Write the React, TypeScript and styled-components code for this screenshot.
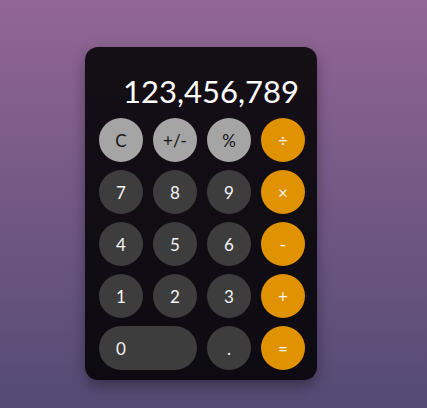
import React from "react";
import styled, { createGlobalStyle } from "styled-components";

const Global = createGlobalStyle`
  html, body { margin: 0; padding: 0; height: 100%; }
  body {
    background: linear-gradient(180deg, #926695 0%, #534a73 100%);
    font-family: Lato, "Open Sans", sans-serif;
    min-height: 408px;
  }
`;

const Page = styled.div`
  display: flex;
  align-items: flex-start;
  padding: 47px 0 0 85px;
`;

const Card = styled.div`
  width: 232px;
  box-sizing: border-box;
  padding: 26px 12px 10px 14px;
  border-radius: 13px;
  background: rgba(0, 0, 0, 0.85);
  box-shadow: 0 6px 14px rgba(0, 0, 0, 0.35);
  display: flex;
  flex-direction: column;
`;

const Display = styled.div`
  height: 36px;
  line-height: 36px;
  font-size: 31px;
  color: #ffffff;
  text-align: right;
  padding-right: 6px;
  margin-bottom: 9px;
  white-space: nowrap;
`;

const Grid = styled.div`
  display: grid;
  grid-template-columns: repeat(4, 44px);
  grid-auto-rows: 44px;
  column-gap: 10px;
  row-gap: 8px;
`;

type Kind = "fn" | "num" | "op";

const Key = styled.button<{ $kind: Kind; $wide?: boolean }>`
  border: none;
  padding: 0;
  margin: 0;
  font-family: Lato, "Open Sans", sans-serif;
  font-size: 17px;
  border-radius: 22px;
  cursor: pointer;
  display: flex;
  align-items: center;
  justify-content: ${(p) => (p.$wide ? "flex-start" : "center")};
  padding-left: ${(p) => (p.$wide ? "17px" : "0")};
  grid-column: ${(p) => (p.$wide ? "span 2" : "auto")};
  background: ${(p) =>
    p.$kind === "fn" ? "#a5a5a5" : p.$kind === "op" ? "#e09200" : "#3d3d3d"};
  color: ${(p) => (p.$kind === "fn" ? "#141414" : "#f4f4f4")};
`;

const keys: { label: string; kind: Kind; wide?: boolean }[] = [
  { label: "C", kind: "fn" },
  { label: "+/-", kind: "fn" },
  { label: "%", kind: "fn" },
  { label: "÷", kind: "op" },
  { label: "7", kind: "num" },
  { label: "8", kind: "num" },
  { label: "9", kind: "num" },
  { label: "×", kind: "op" },
  { label: "4", kind: "num" },
  { label: "5", kind: "num" },
  { label: "6", kind: "num" },
  { label: "-", kind: "op" },
  { label: "1", kind: "num" },
  { label: "2", kind: "num" },
  { label: "3", kind: "num" },
  { label: "+", kind: "op" },
  { label: "0", kind: "num", wide: true },
  { label: ".", kind: "num" },
  { label: "=", kind: "op" },
];

export default function App() {
  return (
    <>
      <Global />
      <Page>
        <Card>
          <Display>123,456,789</Display>
          <Grid>
            {keys.map((k) => (
              <Key key={k.label} $kind={k.kind} $wide={k.wide}>
                {k.label}
              </Key>
            ))}
          </Grid>
        </Card>
      </Page>
    </>
  );
}
